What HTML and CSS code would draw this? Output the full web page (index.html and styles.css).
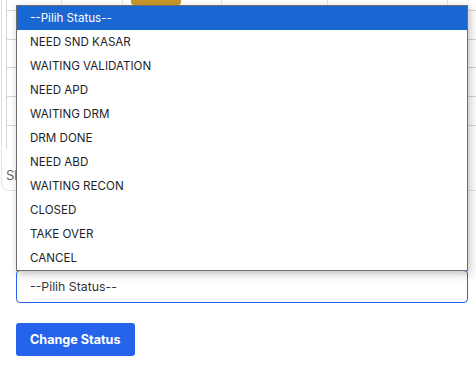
FILE: index.html
```html
<!DOCTYPE html>
<html lang="id">
<head>
    <meta charset="UTF-8">
    <meta name="viewport" content="width=device-width, initial-scale=1.0">
    <title>Change Status</title>
    <link rel="stylesheet" href="styles.css">
</head>
<body>
    <div class="table-card">
        <div class="table-head">
            <span class="head-cell c1"></span>
            <span class="head-cell c2"></span>
            <span class="head-cell c3"><span class="badge"></span></span>
            <span class="head-cell c4"></span>
            <span class="head-cell c5"></span>
            <span class="head-cell c6"></span>
        </div>
        <div class="table-row"></div>
        <div class="table-row"></div>
        <div class="table-row"></div>
        <div class="table-row"></div>
        <div class="table-row"></div>
        <p class="table-info">Sh</p>
    </div>

    <div class="status-form">
        <div class="select-wrap">
            <div class="status-select" id="status" aria-label="Status">--Pilih Status--</div>

            <!-- opened dropdown list -->
            <ul class="status-options">
                <li class="selected">--Pilih Status--</li>
                <li>NEED SND KASAR</li>
                <li>WAITING VALIDATION</li>
                <li>NEED APD</li>
                <li>WAITING DRM</li>
                <li>DRM DONE</li>
                <li>NEED ABD</li>
                <li>WAITING RECON</li>
                <li>CLOSED</li>
                <li>TAKE OVER</li>
                <li>CANCEL</li>
            </ul>
        </div>

        <button type="button" class="change-button">Change Status</button>
    </div>
</body>
</html>
```

FILE: styles.css
```css
* {
    margin: 0;
    padding: 0;
    box-sizing: border-box;
}

body {
    font-family: Inter, 'Noto Sans', sans-serif;
    background: #ffffff;
    color: #222;
    overflow: hidden;
    width: 476px;
    height: 367px;
}

.table-card {
    margin-top: -19px;
    margin-left: 1px;
    width: 520px;
    height: 210px;
    border: 1px solid #e3e3e3;
    border-radius: 8px;
    padding: 0 0 0 4px;
}

.table-head {
    display: flex;
    height: 29px;
    border-left: 1px solid #d6d6d6;
    border-bottom: 1px solid #d6d6d6;
}

.head-cell {
    border-right: 1px solid #e3e3e3;
    display: flex;
    align-items: flex-start;
}

.c1 { width: 55px; }
.c2 { width: 61px; }
.c3 { width: 99px; padding-left: 8px; }
.c4 { width: 106px; }
.c5 { width: 120px; }
.c6 { flex: 1; }

.badge {
    display: block;
    width: 50px;
    height: 23px;
    background: #c8972a;
    border-radius: 3px;
}

.table-row {
    height: 28.7px;
    border-left: 1px solid #d6d6d6;
    border-bottom: 1px solid #d6d6d6;
}

.table-row:last-of-type {
    height: 23px;
    border-bottom: none;
}

.table-info {
    font-size: 13px;
    color: #666;
    padding-top: 18px;
}

.status-form {
    padding: 79px 8px 0 16px;
}

.select-wrap {
    position: relative;
}

.status-select {
    height: 33px;
    border: 1px solid #2563eb;
    border-radius: 4px;
    padding: 0 13px;
    font-size: 12.3px;
    line-height: 31px;
    color: #333;
}

.status-options {
    position: absolute;
    left: 0;
    bottom: 32px;
    width: 452px;
    list-style: none;
    background: #fff;
    border: 1px solid #6f6f6f;
    box-shadow: 2px 3px 8px rgba(0, 0, 0, 0.25);
}

.status-options li {
    height: 24px;
    line-height: 24px;
    padding-left: 13px;
    font-size: 11.6px;
    color: #1e1e2a;
}

.status-options li.selected {
    background: #1967d2;
    color: #fff;
}

.change-button {
    margin-top: 20px;
    height: 33px;
    padding: 0 14px;
    background: #2563eb;
    color: #fff;
    border: none;
    border-radius: 3px;
    font-family: inherit;
    font-size: 12.6px;
    font-weight: 700;
}
```
